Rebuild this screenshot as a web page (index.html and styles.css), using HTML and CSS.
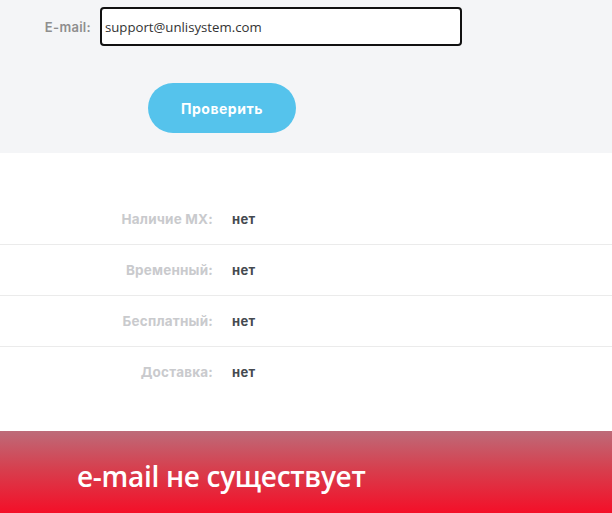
FILE: index.html
```html
<!DOCTYPE html>
<html lang="ru">
<head>
<meta charset="utf-8">
<link rel="stylesheet" href="styles.css">
</head>
<body>
<section class="form">
  <div class="field">
    <label class="field-label">E-mail:</label>
    <div class="input">support@unlisystem.com</div>
  </div>
  <div class="actions">
    <button class="btn">Проверить</button>
  </div>
</section>
<section class="results">
  <div class="row"><span class="key">Наличие MX:</span><span class="val">нет</span></div>
  <div class="row"><span class="key">Временный:</span><span class="val">нет</span></div>
  <div class="row"><span class="key">Бесплатный:</span><span class="val">нет</span></div>
  <div class="row"><span class="key">Доставка:</span><span class="val">нет</span></div>
</section>
<section class="banner">
  <div class="banner-text">e-mail не существует</div>
</section>
</body>
</html>
```
FILE: styles.css
```css
html, body {
  margin: 0;
  padding: 0;
  background: #ffffff;
  font-family: "Inter", "Open Sans", sans-serif;
}
.form {
  background: #f4f5f7;
  height: 153px;
  box-sizing: border-box;
  padding-top: 7px;
}
.field {
  display: flex;
  align-items: center;
}
.field-label {
  width: 91px;
  box-sizing: border-box;
  text-align: right;
  font-size: 13px;
  font-weight: 600;
  color: #8e8e8e;
  letter-spacing: 0.3px;
}
.input {
  margin-left: 9px;
  width: 362px;
  height: 39px;
  box-sizing: border-box;
  border: 2px solid #111;
  border-radius: 4px;
  background: #fff;
  display: flex;
  align-items: center;
  padding-left: 3px;
  font-family: "Open Sans", sans-serif;
  font-size: 13.2px;
  color: #333;
}
.actions {
  padding-left: 148px;
  padding-top: 37px;
}
.btn {
  width: 148px;
  height: 50px;
  border: none;
  border-radius: 25px;
  background: #55c3ec;
  color: #fff;
  font-family: "Inter", sans-serif;
  font-weight: 700;
  font-size: 14px;
  letter-spacing: 0.5px;
  display: block;
  padding: 0;
}
.results {
  padding-top: 41px;
  height: 278px;
  box-sizing: border-box;
}
.row {
  display: flex;
  align-items: center;
  height: 50px;
  border-bottom: 1px solid #ebebeb;
}
.row:last-child {
  border-bottom: none;
}
.key {
  width: 213px;
  text-align: right;
  font-size: 13.5px;
  font-weight: 700;
  color: #c9cacd;
  letter-spacing: 0.2px;
}
.val {
  margin-left: 19px;
  font-size: 13px;
  font-weight: 700;
  color: #454a50;
  letter-spacing: 0.3px;
}
.banner {
  height: 82px;
  background: linear-gradient(to bottom, #bd6b79 0%, #d6404f 45%, #f40f28 100%);
  display: flex;
  align-items: center;
  padding-left: 77px;
  padding-top: 7px;
  box-sizing: border-box;
}
.banner-text {
  color: #fff;
  font-family: "Open Sans", sans-serif;
  font-weight: 600;
  font-size: 28px;
  letter-spacing: -0.3px;
}
```
